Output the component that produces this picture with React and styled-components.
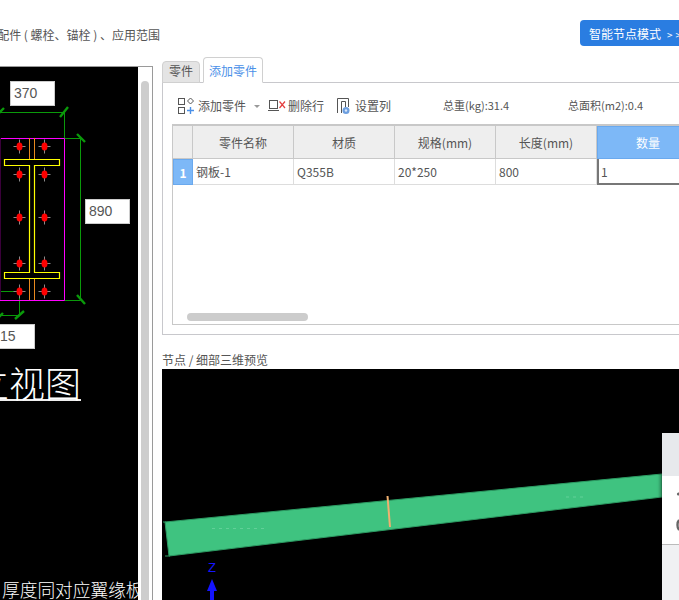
import React from "react";
import styled, { createGlobalStyle } from "styled-components";

const Global = createGlobalStyle`
  html, body { margin: 0; padding: 0; background: #fff; }
  body { font-family: "Noto Sans CJK SC", "Liberation Sans", sans-serif; color: #555; }
  * { box-sizing: border-box; }
`;

const Page = styled.div`
  width: 679px;
  height: 600px;
  overflow: hidden;
  display: flex;
  flex-direction: column;
  background: #fff;
`;
const Header = styled.header`
  height: 66px;
  flex: none;
  display: flex;
  padding-top: 20px;
`;
const Crumb = styled.div`
  width: 160px;
  height: 26px;
  flex: none;
  display: flex;
  justify-content: flex-end;
  align-items: center;
  overflow: hidden;
  white-space: pre;
  font-size: 12px;
  padding-top: 2px;
  color: #555;
`;
const SmartButton = styled.button`
  margin-left: 420px;
  width: 110px;
  height: 26px;
  flex: none;
  border: 0;
  border-radius: 4px;
  background: #2a7de1;
  color: #fff;
  font: inherit;
  font-size: 12px;
  padding: 0 0 0 9px;
  text-align: left;
  white-space: nowrap;
`;
const Arrows = styled.span`
  font-size: 10px;
  margin-left: 6px;
  letter-spacing: 3px;
`;
const Body = styled.div`
  flex: 1;
  min-height: 0;
  display: flex;
`;
const LeftPane = styled.div`
  width: 153px;
  flex: none;
  display: flex;
  border-top: 1px solid #9a9a9a;
  border-right: 1px solid #9a9a9a;
`;
const Canvas = styled.div`
  position: relative;
  width: 138px;
  flex: none;
  background: #000;
  overflow: hidden;
`;
const Drawing = styled.svg`
  position: absolute;
  left: 0;
  top: 0;
`;
const DimLabel = styled.div`
  position: absolute;
  left: ${(p) => p.$x}px;
  top: ${(p) => p.$y}px;
  width: 45px;
  height: 25px;
  background: #fff;
  border: 1px solid #ccc;
  color: #555;
  font-family: "Liberation Sans", sans-serif;
  font-size: 14px;
  line-height: 23px;
  padding-left: ${(p) => p.$pad || 3}px;
`;
const BigTitle = styled.div`
  position: absolute;
  right: 57px;
  top: 292px;
  width: 130px;
  text-align: right;
  white-space: nowrap;
  color: #fff;
  font-family: "Noto Sans CJK SC", sans-serif;
  font-weight: 300;
  font-size: 36px;
  line-height: 46px;
  height: 42px;
  border-bottom: 2px solid #eee;
`;
const Note = styled.div`
  position: absolute;
  left: 2px;
  top: 510px;
  white-space: nowrap;
  color: #fff;
  font-size: 17.7px;
  line-height: 24px;
  font-weight: 300;
`;
const Track = styled.div`
  width: 15px;
  flex: none;
  padding: 14px 3px 0;
`;
const Thumb = styled.div`
  width: 8px;
  height: 100%;
  border-radius: 4px 4px 0 0;
  background: #cdcdcd;
`;
const RightPane = styled.div`
  flex: 1;
  min-width: 0;
  margin-top: -9px;
  margin-left: 9px;
  display: flex;
  flex-direction: column;
`;
const Tabs = styled.div`
  height: 26px;
  flex: none;
  display: flex;
  align-items: flex-end;
  gap: 3px;
  margin-bottom: -1px;
  position: relative;
  z-index: 1;
`;
const Tab = styled.div`
  border: 1px solid #d0d0d0;
  border-radius: 4px 4px 0 0;
  font-size: 12px;
  text-align: center;
  width: ${(p) => (p.$active ? 60 : 38)}px;
  height: ${(p) => (p.$active ? 26 : 22)}px;
  line-height: ${(p) => (p.$active ? 26 : 18)}px;
  border-bottom-color: ${(p) => (p.$active ? "#fff" : "#d0d0d0")};
  background: ${(p) => (p.$active ? "#fff" : "#e4e4e4")};
  color: ${(p) => (p.$active ? "#4a90e8" : "#555")};
`;
const TabPanel = styled.section`
  height: 253px;
  width: 560px;
  flex: none;
  border: 1px solid #c8c8cc;
  padding: 0 9px 9px;
  display: flex;
  flex-direction: column;
`;
const Toolbar = styled.div`
  height: 41px;
  flex: none;
  display: flex;
  align-items: center;
  font-size: 12px;
  padding: 4px 0 0 5px;
  color: #555;
`;
const ToolItem = styled.div`
  display: flex;
  align-items: center;
  gap: ${(p) => p.$gap || 3}px;
  margin-left: ${(p) => p.$ml || 0}px;
  margin-right: ${(p) => p.$mr || 0}px;
  white-space: nowrap;
`;
const Caret = styled.span`
  width: 0;
  height: 0;
  margin: 1px 0 0 5px;
  border-left: 3px solid transparent;
  border-right: 3px solid transparent;
  border-top: 3px solid #999;
`;
const Stat = styled.div`
  font-size: 11px;
  white-space: nowrap;
  width: ${(p) => p.$w}px;
  flex: none;
  margin-top: -2px;
  margin-left: ${(p) => p.$ml || 0}px;
`;
const Grid = styled.div`
  position: relative;
  flex: 1;
  border: 1px solid #c8c8c8;
  border-width: 1px 0 1px 1px;
  border-top-width: 2px;
  font-size: 12px;
`;
const GridRow = styled.div`
  display: grid;
  grid-template-columns: 20px 101px 101px 101px 101px 101px;
  height: ${(p) => (p.$head ? 33 : 26)}px;
`;
const Cell = styled.div`
  border-right: 1px solid ${(p) => (p.$head ? "#c8c8c8" : "#ddd")};
  border-bottom: 1px solid ${(p) => (p.$head ? "#c8c8c8" : "#ddd")};
  background: ${(p) => (p.$head ? "#eee" : "#fff")};
  display: flex;
  align-items: center;
  padding: ${(p) => (p.$head ? "0" : "0 3px")};
  justify-content: ${(p) => (p.$head ? "center" : "flex-start")};
  color: #555;
  font-size: 12px;
`;
const ActiveHead = styled(Cell)`
  background: #7db8f7;
  color: #fff;
  border: 1px solid #6aa9ee;
  border-right: 0;
`;
const RowIndex = styled(Cell)`
  background: #7db8f7;
  color: #fff;
  font-weight: 700;
  justify-content: center;
  border: 1px solid #6aa9ee;
  padding: 0;
`;
const ActiveCell = styled(Cell)`
  border: 2px solid #777;
  border-right: 0;
  border-top: 0;
  padding-left: 2px;
`;
const HScroll = styled.div`
  position: absolute;
  left: 14px;
  bottom: 3px;
  width: 121px;
  height: 8px;
  border-radius: 4px;
  background: #ccc;
`;
const PreviewTitle = styled.div`
  margin-top: 15px;
  height: 19px;
  flex: none;
  font-size: 12px;
  line-height: 19px;
  color: #555;
  white-space: nowrap;
`;
const Preview = styled.div`
  position: relative;
  flex: 1;
  background: #000;
  overflow: hidden;
`;
const AxisLabel = styled.div`
  position: absolute;
  left: 46px;
  top: 192px;
  font-family: "Liberation Sans", sans-serif;
  font-size: 13px;
  line-height: 14px;
  color: #1414ff;
`;
const SidePanel = styled.div`
  position: absolute;
  left: 500px;
  top: 64px;
  width: 30px;
  height: 180px;
  background: #f0f1f3;
  box-shadow: -2px 0 3px rgba(0, 0, 0, 0.35);
  display: flex;
  flex-direction: column;
`;
const SideHead = styled.div`
  height: 43px;
  background: #e7e9ec;
`;
const SideBody = styled.div`
  height: 69px;
  background: #fff;
  border-bottom: 1px solid #bbb;
`;

const Bolt = ({ x, y }) => (
  <g>
    <path d={`M${x - 6} ${y}H${x + 6}M${x} ${y - 7}V${y + 7}`} stroke="#8a8a8a" strokeWidth="1" />
    <ellipse cx={x} cy={y} rx="3" ry="4" fill="#f00" />
  </g>
);

const Drafting = () => (
  <Drawing width="138" height="533" viewBox="0 67 138 533">
    <g stroke="#0a9a0a" fill="none">
      <path d="M0 112.5H64.5V138M64.5 138.5H80.5V300.5H64.5M0 291.5H19.5V315.5H0" strokeWidth="1" />
      <path d="M-2 114L4 108M60 117L68 107M77 134L85 142M77 295L85 304M15 319L24 311M-2 318L3 313" strokeWidth="2.4" />
    </g>
    <path d="M0 138.5H64.5V300.5H0" stroke="#f0f" fill="none" />
    <path d="M0.5 138V300" stroke="#3a003a" fill="none" />
    <g stroke="#e8891e" fill="none">
      <path d="M29.5 138V159M34.5 138V159M29.5 279V300M34.5 279V300" />
    </g>
    <path
      d="M4.5 159.5H59.5V165.5H34.5V272.5H59.5V278.5H4.5V272.5H29.5V165.5H4.5Z"
      stroke="#ff0"
      strokeWidth="1.2"
      fill="none"
    />
    {[146.5, 174.5, 217.5, 263.5, 291.5].flatMap((y) => [19.5, 44.5].map((x) => <Bolt key={`${x}-${y}`} x={x} y={y} />))}
  </Drawing>
);

const AddIcon = () => (
  <svg width="18" height="18" viewBox="0 0 18 18" fill="none">
    <rect x="1.5" y="1.5" width="6" height="6" stroke="#555" />
    <rect x="1.5" y="10.5" width="6" height="6" stroke="#555" />
    <path d="M13.5 1L16.5 4L13.5 7L10.5 4Z" stroke="#555" />
    <path d="M13.5 10V17M10 13.5H17" stroke="#4a90e8" strokeWidth="1.4" />
  </svg>
);
const RemoveIcon = () => (
  <svg width="18" height="14" viewBox="0 0 18 14" fill="none">
    <rect x="1.5" y="1.5" width="8" height="8" stroke="#555" />
    <path d="M0 11.5H11" stroke="#555" />
    <path d="M11.5 2.5L17 9M17 2.5L11.5 9" stroke="#e43d3d" strokeWidth="1.2" />
  </svg>
);
const ColumnsIcon = () => (
  <svg width="14" height="18" viewBox="0 0 14 18" fill="none">
    <path d="M1.5 16V1.5H12.5V10M5.5 16V4.5H9.5V10" stroke="#555" />
    <circle cx="10" cy="13.5" r="3.5" fill="#6d9fe0" />
    <circle cx="10" cy="13.5" r="1.2" fill="#dbe8f8" />
  </svg>
);

const Beam = () => (
  <Drawing width="517" height="231" viewBox="162 369 517 231">
    <polygon points="165,522 662,474 662,497 169,556" fill="#3fc380" stroke="#2c9a62" strokeWidth="1" />
    <path d="M163 522H166M165 556H170" stroke="#2c9a62" />
    <path d="M212 584V600" stroke="#1414ff" strokeWidth="4" />
    <polygon points="212,579 217,591 207,591" fill="#1414ff" />
    <path d="M387.5 496L390 527" stroke="#f0b070" strokeWidth="2" />
    <path d="M212 528.5H265M566 497H586" stroke="#8fe0b8" strokeOpacity="0.55" strokeWidth="0.8" strokeDasharray="3 4" />
  </Drawing>
);

const SideGlyphs = () => (
  <svg width="30" height="69" viewBox="0 0 30 69" fill="none">
    <circle cx="16.5" cy="18" r="1.6" fill="#666" />
    <path d="M17 44C15 46 15 52 17 54" stroke="#666" strokeWidth="2.4" />
  </svg>
);

const headers = ["零件名称", "材质", "规格(mm)", "长度(mm)"];
const values = ["钢板-1", "Q355B", "20*250", "800"];

export default function App() {
  return (
    <Page>
      <Global />
      <Header>
        <Crumb>配件 ( 螺栓、锚栓 ) 、应用范围</Crumb>
        <SmartButton>
          智能节点模式<Arrows>&gt;&gt;&gt;</Arrows>
        </SmartButton>
      </Header>
      <Body>
        <LeftPane>
          <Canvas>
            <Drafting />
            <DimLabel $x={10} $y={14} $pad={3}>370</DimLabel>
            <DimLabel $x={85} $y={132}>890</DimLabel>
            <DimLabel $x={-10} $y={257} $pad={9}>15</DimLabel>
            <BigTitle>立视图</BigTitle>
            <Note>厚度同对应翼缘板</Note>
          </Canvas>
          <Track>
            <Thumb />
          </Track>
        </LeftPane>
        <RightPane>
          <Tabs>
            <Tab>零件</Tab>
            <Tab $active>添加零件</Tab>
          </Tabs>
          <TabPanel>
            <Toolbar>
              <ToolItem>
                <AddIcon />
                添加零件
                <Caret />
              </ToolItem>
              <ToolItem $ml={8} $mr={12} $gap={2}>
                <RemoveIcon />
                删除行
              </ToolItem>
              <ToolItem $gap={5}>
                <ColumnsIcon />
                设置列
              </ToolItem>
              <Stat $w={125} $ml={52}>总重(kg):31.4</Stat>
              <Stat $w={80}>总面积(m2):0.4</Stat>
            </Toolbar>
            <Grid>
              <GridRow $head>
                <Cell $head />
                {headers.map((h) => (
                  <Cell $head key={h}>{h}</Cell>
                ))}
                <ActiveHead $head>数量</ActiveHead>
              </GridRow>
              <GridRow>
                <RowIndex>1</RowIndex>
                {values.map((v) => (
                  <Cell key={v}>{v}</Cell>
                ))}
                <ActiveCell>1</ActiveCell>
              </GridRow>
              <HScroll />
            </Grid>
          </TabPanel>
          <PreviewTitle>节点 / 细部三维预览</PreviewTitle>
          <Preview>
            <Beam />
            <AxisLabel>Z</AxisLabel>
            <SidePanel>
              <SideHead />
              <SideBody>
                <SideGlyphs />
              </SideBody>
            </SidePanel>
          </Preview>
        </RightPane>
      </Body>
    </Page>
  );
}
